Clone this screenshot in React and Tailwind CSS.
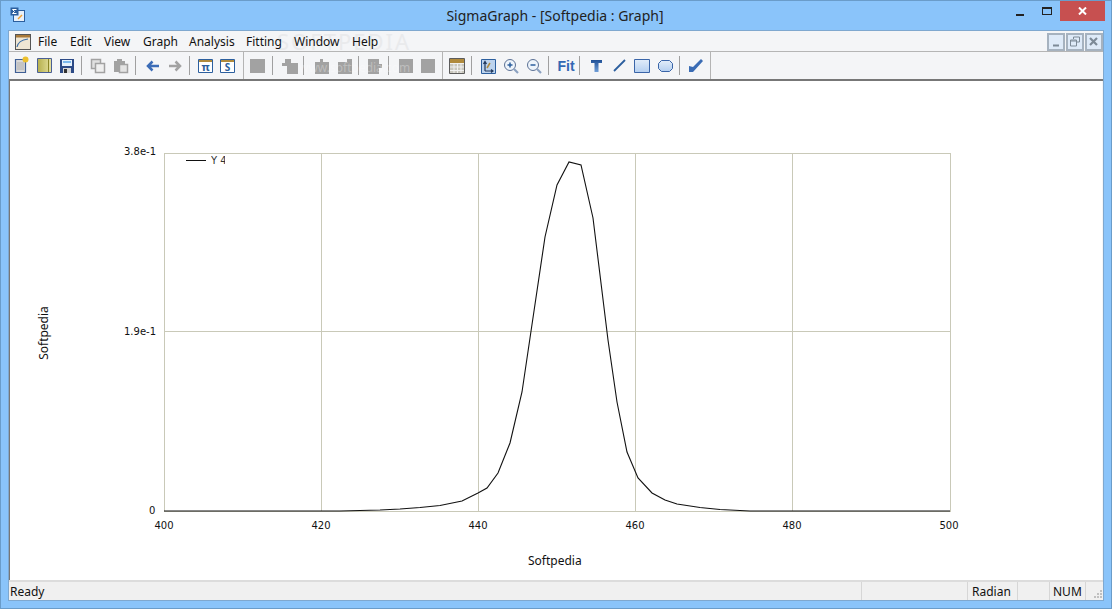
import React from 'react';

const FONT = "font-['Noto_Sans','Open_Sans',sans-serif]";
const SMALL = "font-['DejaVu_Sans',sans-serif] text-[10px] leading-[14px]";

const menuItems = [
  ['File', 'w-[32px] ml-[7px]'],
  ['Edit', 'w-[34px]'],
  ['View', 'w-[39px]'],
  ['Graph', 'w-[46px]'],
  ['Analysis', 'w-[57px]'],
  ['Fitting', 'w-[48px]'],
  ['Window', 'w-[58px]'],
  ['Help', 'w-[40px]'],
];

const CURVE = '164,511 340,511 380,510 400,509 420,507.5 440,505.5 462,501 478,493 487,488 498,473 510,443 522,392 530,338 545,237 557,185 569,162 581,165 593,218 608,340 617,402 627,452 638,478 652,493 665,500 677,504 700,507.5 720,509.5 750,511 950,511';

function Sep({ className }) {
  return <span className={`w-px h-[19px] bg-[#a0a0a0] shrink-0 ${className}`} />;
}

function TallSep({ className }) {
  return <span className={`w-px self-stretch bg-[#b4b4b4] shrink-0 ${className}`} />;
}

function Icon({ children, className = '' }) {
  return (
    <svg width="20" height="20" viewBox="0 0 20 20" className={`shrink-0 ${className}`}>
      {children}
    </svg>
  );
}

const Gray = ({ d }) => <Icon><path d={d} fill="#a2a2a2" /></Icon>;

const SQUARE = 'M3 3h14v14H3z';

export default function App() {
  return (
    <div className={`w-[1112px] h-[609px] overflow-hidden bg-[#8ac4fa] border border-[#6a9cc9] flex flex-col text-[#111] ${FONT}`}>
      <svg width="0" height="0" className="absolute">
        <defs>
          <linearGradient id="blueFill" x1="0" y1="0" x2="0" y2="1">
            <stop offset="0" stopColor="#e2edf9" />
            <stop offset="1" stopColor="#b4cff0" />
          </linearGradient>
          <linearGradient id="tFill" x1="0" y1="0" x2="0" y2="1">
            <stop offset="0" stopColor="#1f4f96" />
            <stop offset="1" stopColor="#6f9ed8" />
          </linearGradient>
          <linearGradient id="bookFill" x1="0" y1="0" x2="1" y2="0">
            <stop offset="0" stopColor="#b5af4c" />
            <stop offset="1" stopColor="#e6e2a0" />
          </linearGradient>
        </defs>
      </svg>

      {/* title bar */}
      <div className="h-[29px] shrink-0 flex items-start">
        <svg width="16" height="16" viewBox="0 0 16 16" className="ml-[9px] mt-[6px] shrink-0">
          <rect x="3.500" y="3.500" width="11" height="11" fill="#e8f1fb" stroke="#2c5f9e" />
          <rect x="0.500" y="0.500" width="8" height="8" fill="#2c5f9e" />
          <path d="M6.500 2.500h-4l2 2-2 2h4" stroke="#fff" fill="none" />
          <path d="M8 12l4-4" stroke="#f0a030" strokeWidth="1.500" />
        </svg>
        <div className="flex-1 pl-[68px] text-center text-[14px] leading-[30px] text-[#222]">SigmaGraph - [Softpedia : Graph]</div>
        <div className="flex items-start h-[20px]">
          <span className="w-[8px] h-[2px] bg-[#222] mt-[13px] mr-[18px]" />
          <span className="w-[10px] h-[8px] border border-[#222] border-t-2 mt-[6px] mr-[8px]" />
          <span className="w-[45px] h-[20px] bg-[#c75050] flex items-center justify-center mr-[6px]">
            <svg width="9" height="8" viewBox="0 0 9 8"><path d="M1 0.500l7 7M8 0.500l-7 7" stroke="#fff" strokeWidth="2" /></svg>
          </span>
        </div>
      </div>

      {/* client */}
      <div className="flex-1 mx-[7px] mb-[7px] flex flex-col border border-[#7fa8cf] bg-[#f4f5f7] min-h-0 relative">
        {/* watermark, sits behind the menu */}
        <span className="absolute left-[268px] top-[-3px] text-[22px] leading-[26px] tracking-[2px] text-[#e9eaec] pointer-events-none">SOFTPEDIA</span>

        {/* menu */}
        <div className="h-[20px] shrink-0 flex items-center text-[12px] relative pt-[1px]">
          <svg width="16" height="16" viewBox="0 0 16 16" className="ml-[6px] shrink-0">
            <rect x="0.500" y="0.500" width="15" height="15" fill="#efe6d4" stroke="#555" />
            <rect x="1" y="1" width="14" height="2.500" fill="#a97a3a" />
            <path d="M2 13c1-5 4-7 11-8" stroke="#3a6ea8" strokeWidth="1.200" fill="none" />
          </svg>
          {menuItems.map(([label, cls]) => (
            <span key={label} className={`${cls} shrink-0`}>{label}</span>
          ))}
          <span className="ml-auto flex gap-px">
            {['min', 'restore', 'close'].map(k => (
              <span key={k} className="w-[18px] h-[18px] border-2 border-[#a6b2bf] bg-[#deeaf8] flex items-center justify-center">
                <svg width="12" height="12" viewBox="0 0 12 12">
                  {k === 'min' && <path d="M3 9.500h6" stroke="#7d8a97" strokeWidth="2" />}
                  {k === 'restore' && <path d="M4.500 3V1h6v5H8M1.500 4h6v6h-6zM1.500 5h6" stroke="#7d8a97" fill="none" />}
                  {k === 'close' && <path d="M2 2l7 7M9 2l-7 7" stroke="#7d8a97" strokeWidth="2.200" />}
                </svg>
              </span>
            ))}
          </span>
        </div>

        {/* toolbar */}
        <div className="h-[30px] shrink-0 border-t border-[#b5b5b5] border-b-2 border-b-[#777] flex items-center pl-[2px]">
          <Icon>
            <path d="M4.500 3.500h10v13h-10z" fill="#d8d8d8" stroke="#3f5f95" strokeWidth="1.200" />
            <path d="M6 7h7M6 9h7M6 11h7M6 13h7" stroke="#b0b0b0" />
            <circle cx="14.500" cy="3.500" r="3" fill="#ecc02e" />
          </Icon>
          <span className="w-[3px]" />
          <Icon>
            <path d="M3.500 2.500h14v14h-14z" fill="url(#bookFill)" stroke="#4a5f95" />
            <path d="M14.500 3v13" stroke="#8a8424" />
          </Icon>
          <span className="w-[3px]" />
          <Icon>
            <path d="M3 3h14v14H3z" fill="#2c4a86" />
            <path d="M5 4h10v6H5z" fill="#e4f1fc" />
            <path d="M6 6h8" stroke="#58a6e8" strokeWidth="1.500" />
            <path d="M6 12h8v5H6z" fill="#d8d8d8" />
            <path d="M7 13h3v4H7z" fill="#333" />
          </Icon>
          <Sep className="ml-[4px] mr-[6px]" />
          <Icon>
            <path d="M3.500 3.500h9v9h-9z" fill="#e0e0e0" stroke="#a2a2a2" strokeWidth="1.500" />
            <path d="M7.500 7.500h9v9h-9z" fill="#efefef" stroke="#a2a2a2" strokeWidth="1.500" />
          </Icon>
          <span className="w-[3px]" />
          <Icon>
            <path d="M3 5h3V3h5v2h3v11H3z" fill="#a2a2a2" />
            <path d="M8.500 8.500h8v8h-8z" fill="#e4e4e4" stroke="#a2a2a2" strokeWidth="1.500" />
          </Icon>
          <Sep className="ml-[4px] mr-[7px]" />
          <Icon>
            <path d="M16 10H5M9.500 5.500L5 10l4.500 4.500" stroke="#3b6cb7" strokeWidth="2.500" fill="none" />
          </Icon>
          <span className="w-[2px]" />
          <Icon>
            <path d="M4 10h11M10.500 5.500L15 10l-4.500 4.500" stroke="#a2a2a2" strokeWidth="2.500" fill="none" />
          </Icon>
          <Sep className="ml-[4px] mr-[6px]" />
          <Icon>
            <path d="M2.500 3.500h14v13h-14z" fill="#fff" stroke="#2c5f9e" />
            <path d="M3 4h13v2H3z" fill="#b08a3c" />
            <text x="9.500" y="15" textAnchor="middle" fontSize="11" fontWeight="700" fill="#2c5f9e">π</text>
          </Icon>
          <span className="w-[2px]" />
          <Icon>
            <path d="M2.500 3.500h14v13h-14z" fill="#fff" stroke="#2c5f9e" />
            <path d="M3 4h13v2H3z" fill="#b08a3c" />
            <text x="9.500" y="15" textAnchor="middle" fontSize="10" fontWeight="700" fill="#2c5f9e">S</text>
          </Icon>
          <TallSep className="ml-[5px] mr-[3px]" />
          <Gray d="M3 3h15v14H3z" />
          <Sep className="ml-[5px] mr-[7px]" />
          <Gray d="M5 3h6v4h7v11H7V10H2V7h3z" />
          <Sep className="ml-[3px] mr-[8px]" />
          <Gray d="M3 6h5V3h3v3h6v12H3z" />
          <span className="w-[3px]" />
          <Gray d="M3 6h9V3h5v15H3z" />
          <Sep className="ml-[3px] mr-[6px]" />
          <Gray d="M3 3h11v5h3v4h-3v6H3z" />
          <Sep className="ml-[3px] mr-[7px]" />
          <Gray d={SQUARE} />
          <span className="w-[2px]" />
          <Gray d={SQUARE} />
          <TallSep className="ml-[4px] mr-[4px]" />
          <Icon>
            <path d="M2.500 2.500h15v15h-15z" fill="#c9c7bd" stroke="#5c5c5c" />
            <path d="M3 3h14v4H3z" fill="#b08a3c" />
            <path d="M3 7.500h14M3 11h14M3 14.500h14M7 7v10M10.500 7v10M14 7v10" stroke="#f0f0f0" />
          </Icon>
          <Sep className="ml-[4px] mr-[6px]" />
          <Icon>
            <path d="M3.500 3.500h14v14h-14z" fill="#bcd3ee" stroke="#2c5f9e" />
            <path d="M7 15V6M5.500 8L7 5.500 8.500 8M7 15h8M13 13.500l2 1.500-2 1.500" stroke="#223a5e" strokeWidth="1.200" fill="none" />
            <path d="M9 12l3-5" stroke="#b08a3c" strokeWidth="1.500" />
          </Icon>
          <span className="w-[3px]" />
          <Icon>
            <circle cx="9" cy="9" r="5.500" fill="#eef4fb" stroke="#5b7195" />
            <path d="M6.500 9h5M9 6.500v5" stroke="#2c5f9e" strokeWidth="1.500" />
            <path d="M13 13l4 4" stroke="#8aa0c0" strokeWidth="2.200" />
          </Icon>
          <span className="w-[3px]" />
          <Icon>
            <circle cx="9" cy="9" r="5.500" fill="#eef4fb" stroke="#5b7195" />
            <path d="M6.500 9h5" stroke="#2c5f9e" strokeWidth="1.500" />
            <path d="M13 13l4 4" stroke="#8aa0c0" strokeWidth="2.200" />
          </Icon>
          <Sep className="ml-[4px] mr-[7px]" />
          <span className="w-[20px] shrink-0 text-center text-[14px] font-bold leading-none text-[#3368b4] font-['Liberation_Sans',sans-serif]">Fit</span>
          <Sep className="ml-[3px] mr-[6px]" />
          <Icon>
            <path d="M5 4h11v3h-3.500v9h-4V7H5z" fill="url(#tFill)" />
          </Icon>
          <span className="w-[4px]" />
          <Icon>
            <path d="M4 15L15 4" stroke="#2c5f9e" strokeWidth="1.800" />
          </Icon>
          <span className="w-[2px]" />
          <Icon>
            <path d="M2.500 3.500h15v13h-15z" fill="url(#blueFill)" stroke="#3a65a8" />
          </Icon>
          <span className="w-[3px]" />
          <Icon>
            <path d="M6.500 4.500h8l3 3v5l-3 3h-8l-3-3v-5z" fill="url(#blueFill)" stroke="#3a65a8" />
          </Icon>
          <Sep className="ml-[4px] mr-[5px]" />
          <Icon>
            <path d="M4 10l4 1 8-8 2 2L8 16H4z" fill="#3a6cb4" />
          </Icon>
          <TallSep className="ml-[5px]" />
        </div>

        {/* graph area */}
        <div className="flex-1 min-h-0 mr-[1px] border-l border-l-[#777] bg-white relative overflow-hidden">
          <div className="absolute left-[154px] top-[72px] w-[787px] h-[359px] border border-[#c9c9b8]">
            <div className="grid grid-cols-5 h-full">
              <div className="border-r border-[#c9c9b8]" />
              <div className="border-r border-[#c9c9b8]" />
              <div className="border-r border-[#c9c9b8]" />
              <div className="border-r border-[#c9c9b8]" />
              <div />
            </div>
            <div className="absolute inset-x-0 top-[177px] h-px bg-[#c9c9b8]" />
          </div>
          <svg width="1000" height="520" viewBox="10 81 1000 520" className="absolute left-0 top-0">
            <polyline points={CURVE} fill="none" stroke="#111" strokeWidth="1.100" />
            <path d="M186 160.500h20" stroke="#111" />
          </svg>
          <span className={`absolute left-[201px] top-[73px] w-[14px] overflow-hidden whitespace-nowrap text-[#333] ${SMALL}`}>Y 4</span>
          <span className={`absolute left-[114px] top-[64px] ${SMALL}`}>3.8e-1</span>
          <span className={`absolute left-[114px] top-[244px] ${SMALL}`}>1.9e-1</span>
          <span className={`absolute left-[139px] top-[423px] ${SMALL}`}>0</span>
          {[['400', 144], ['420', 301], ['440', 458], ['460', 615], ['480', 772], ['500', 929]].map(([t, x]) => (
            <span key={t} style={{ left: x }} className={`absolute top-[438px] w-[20px] text-center ${SMALL}`}>{t}</span>
          ))}
          <span className="absolute left-[518px] top-[472px] text-[12px] leading-[16px]">Softpedia</span>
          <span className="absolute left-[4px] top-[244px] w-[60px] text-center text-[12px] leading-[16px] -rotate-90">Softpedia</span>
        </div>

        {/* status bar */}
        <div className="h-[20px] shrink-0 border-t-2 border-[#dcdcdc] bg-[#f0f0f0] flex items-stretch text-[12px] leading-[20px]">
          <span className="flex-1 pl-[1px]">Ready</span>
          <span className="w-[106px] border-l border-[#d6d6d6]" />
          <span className="w-[50px] border-l border-[#d6d6d6] pl-[4px]">Radian</span>
          <span className="w-[32px] border-l border-[#d6d6d6]" />
          <span className="w-[36px] border-l border-[#d6d6d6] pl-[3px]">NUM</span>
          <span className="w-[18px] border-l border-[#d6d6d6] flex items-end justify-end">
            <svg width="9" height="9" viewBox="0 0 9 9" className="mb-[1px]">
              <path d="M6 0h2v2H6zM3 3h2v2H3zM6 3h2v2H6zM0 6h2v2H0zM3 6h2v2H3zM6 6h2v2H6z" fill="#c0c0c0" />
            </svg>
          </span>
        </div>

        {/* second watermark line over the toolbar */}
        <span className="absolute left-[290px] top-[30px] text-[12px] leading-[14px] text-white/30 pointer-events-none">www.softpedia.com</span>
      </div>
    </div>
  );
}
